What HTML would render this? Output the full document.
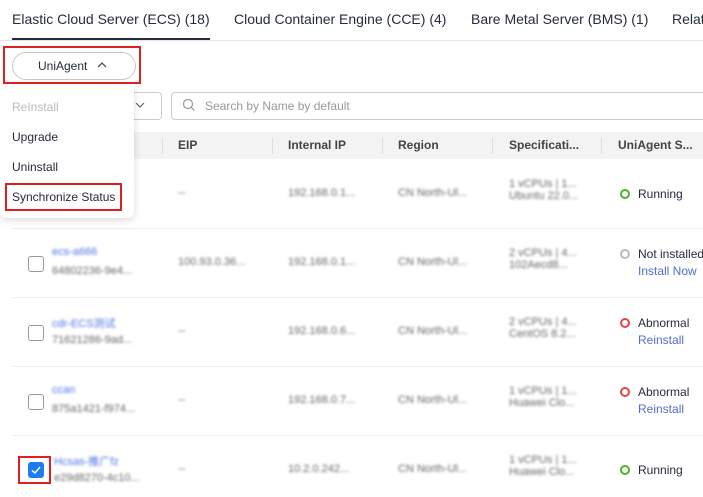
<html><head><style>
body{margin:0;width:703px;height:497px;overflow:hidden;background:#fff;font-family:"Liberation Sans",sans-serif;font-size:12px;color:#252b3a;position:relative}
.a{position:absolute;white-space:nowrap}
.bl{filter:blur(1.4px);color:#666;font-size:11px}
.blu{filter:blur(1.4px);color:#4d73e8;font-size:11px}
.cb{position:absolute;left:28px;width:14px;height:14px;border:1px solid #999;border-radius:3px;background:#fff}
.dot{display:inline-block;width:6px;height:6px;border-radius:50%;border:2px solid;margin-right:8px;vertical-align:-1px}
.hd{position:absolute;top:138px;font-weight:bold;color:#444;font-size:12px}
.sep{position:absolute;top:138px;width:1px;height:16px;background:#ddd}
.rl{position:absolute;left:12px;right:0;height:1px;background:#eee}
.lk{color:#526ecc}
</style></head><body>
<div class="a" style="left:12px;top:11px;font-size:14px;color:#252b3a">Elastic Cloud Server (ECS) (18)</div>
<div class="a" style="left:234px;top:11px;font-size:14px">Cloud Container Engine (CCE) (4)</div>
<div class="a" style="left:471px;top:11px;font-size:14px">Bare Metal Server (BMS) (1)</div>
<div class="a" style="left:672px;top:11px;font-size:14px">Relat</div>
<div class="a" style="left:0;top:40px;width:703px;height:1px;background:#e5e5e5"></div>
<div class="a" style="left:12px;top:38px;width:198px;height:2px;background:#252b3a"></div>

<div class="a" style="left:171px;top:92px;width:540px;height:26px;border:1px solid #ccc;border-radius:4px"></div>
<svg class="a" style="left:182px;top:98px" width="14" height="14"><circle cx="6" cy="6" r="4.5" fill="none" stroke="#999" stroke-width="1.2"/><line x1="9.3" y1="9.3" x2="12.5" y2="12.5" stroke="#999" stroke-width="1.2"/></svg>
<div class="a" style="left:205px;top:99px;color:#999">Search by Name by default</div>
<div class="a" style="left:60px;top:92px;width:100px;height:26px;border:1px solid #ccc;border-radius:4px"></div>
<svg class="a" style="left:134px;top:100px" width="12" height="10"><path d="M2 3l4 4 4-4" fill="none" stroke="#666" stroke-width="1.2"/></svg>

<div class="a" style="left:12px;top:132px;width:691px;height:27px;background:#f3f3f3"></div>
<div class="hd" style="left:178px">EIP</div><div class="hd" style="left:288px">Internal IP</div><div class="hd" style="left:398px">Region</div><div class="hd" style="left:509px">Specificati...</div><div class="hd" style="left:618px">UniAgent S...</div>
<div class="sep" style="left:162px"></div><div class="sep" style="left:272px"></div><div class="sep" style="left:382px"></div><div class="sep" style="left:492px"></div><div class="sep" style="left:601px"></div>

<div class="rl" style="top:228px"></div><div class="rl" style="top:297px"></div><div class="rl" style="top:366px"></div><div class="rl" style="top:435px"></div>

<div class="a bl" style="left:178px;top:187px">--</div><div class="a bl" style="left:288px;top:187px">192.168.0.1...</div><div class="a bl" style="left:398px;top:187px">CN North-Ul...</div>
<div class="a bl" style="left:509px;top:178px">1 vCPUs | 1...<br>Ubuntu 22.0...</div>
<div class="a" style="left:620px;top:187px"><span class="dot" style="border-color:#50b027"></span>Running</div>

<div class="cb" style="top:256px"></div>
<div class="a blu" style="left:52px;top:246px">ecs-a666</div><div class="a bl" style="left:52px;top:265px">64802236-9e4...</div>
<div class="a bl" style="left:178px;top:256px">100.93.0.36...</div><div class="a bl" style="left:288px;top:256px">192.168.0.1...</div><div class="a bl" style="left:398px;top:256px">CN North-Ul...</div>
<div class="a bl" style="left:509px;top:247px">2 vCPUs | 4...<br>102Aecd8...</div>
<div class="a" style="left:620px;top:247px"><span class="dot" style="border-color:#bbb"></span>Not installed</div>
<div class="a lk" style="left:638px;top:264px">Install Now</div>

<div class="cb" style="top:325px"></div>
<div class="a blu" style="left:52px;top:315px">cdr-ECS测试</div><div class="a bl" style="left:52px;top:334px">71621286-9ad...</div>
<div class="a bl" style="left:178px;top:325px">--</div><div class="a bl" style="left:288px;top:325px">192.168.0.6...</div><div class="a bl" style="left:398px;top:325px">CN North-Ul...</div>
<div class="a bl" style="left:509px;top:316px">2 vCPUs | 4...<br>CentOS 8.2...</div>
<div class="a" style="left:620px;top:316px"><span class="dot" style="border-color:#e54545"></span>Abnormal</div>
<div class="a lk" style="left:638px;top:333px">Reinstall</div>

<div class="cb" style="top:394px"></div>
<div class="a blu" style="left:52px;top:384px">ccan</div><div class="a bl" style="left:52px;top:403px">875a1421-f974...</div>
<div class="a bl" style="left:178px;top:394px">--</div><div class="a bl" style="left:288px;top:394px">192.168.0.7...</div><div class="a bl" style="left:398px;top:394px">CN North-Ul...</div>
<div class="a bl" style="left:509px;top:385px">1 vCPUs | 1...<br>Huawei Clo...</div>
<div class="a" style="left:620px;top:385px"><span class="dot" style="border-color:#e54545"></span>Abnormal</div>
<div class="a lk" style="left:638px;top:402px">Reinstall</div>

<div class="a" style="left:28px;top:462px;width:16px;height:16px;border-radius:3px;background:#1c7cf0"></div>
<svg class="a" style="left:28px;top:462px" width="16" height="16"><path d="M4 8.5l3 2.5 5-6" fill="none" stroke="#fff" stroke-width="1.5"/></svg>
<div class="a" style="left:18px;top:456px;width:29px;height:24px;border:2px solid #e02020"></div>
<div class="a blu" style="left:54px;top:453px">Hcsas-推广fz</div><div class="a bl" style="left:54px;top:472px">e29d8270-4c10...</div>
<div class="a bl" style="left:178px;top:463px">--</div><div class="a bl" style="left:288px;top:463px">10.2.0.242...</div><div class="a bl" style="left:398px;top:463px">CN North-Ul...</div>
<div class="a bl" style="left:509px;top:454px">1 vCPUs | 1...<br>Huawei Clo...</div>
<div class="a" style="left:620px;top:463px"><span class="dot" style="border-color:#50b027"></span>Running</div>

<div class="a" style="left:0;top:84px;width:134px;height:134px;background:#fff;border-radius:0 0 6px 6px;box-shadow:0 2px 8px rgba(0,0,0,.15)"></div>
<div class="a" style="left:12px;top:100px;color:#bbb">ReInstall</div>
<div class="a" style="left:12px;top:130px">Upgrade</div>
<div class="a" style="left:12px;top:160px">Uninstall</div>
<div class="a" style="left:12px;top:190px">Synchronize Status</div>
<div class="a" style="left:5px;top:183px;width:113px;height:24px;border:2px solid #e02020"></div>

<div class="a" style="left:12px;top:52px;width:122px;height:26px;border:1px solid #c8c8c8;border-radius:14px"></div>
<div class="a" style="left:38px;top:59px">UniAgent</div>
<svg class="a" style="left:96px;top:60px" width="12" height="10"><path d="M2 7l4-4 4 4" fill="none" stroke="#555" stroke-width="1.3"/></svg>
<div class="a" style="left:3px;top:46px;width:134px;height:34px;border:2px solid #e02020"></div>
</body></html>
